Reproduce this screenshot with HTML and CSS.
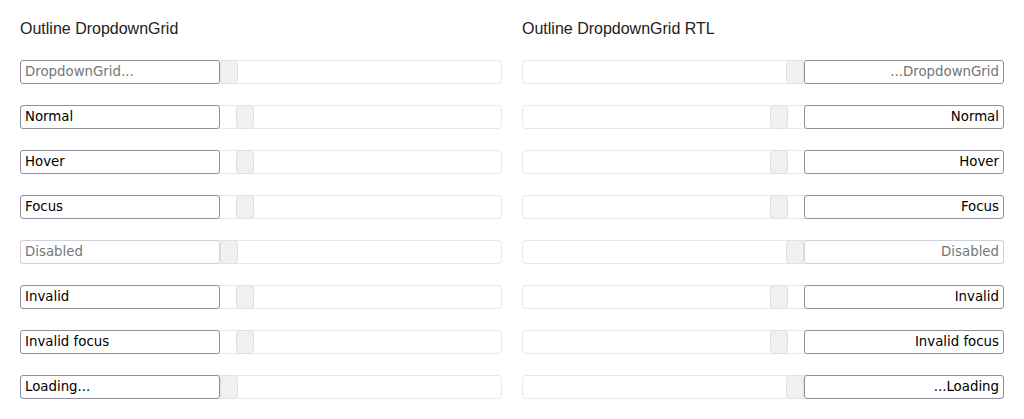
FILE: index.html
```html
<!DOCTYPE html>
<html>
<head>
<meta charset="utf-8">
<link rel="stylesheet" href="styles.css">
</head>
<body>
<div class="page">
  <section class="col">
    <h2 class="title">Outline DropdownGrid</h2>
    <div class="rows">
      <div class="dg"><input class="field" placeholder="DropdownGrid..."><span class="btn tight"></span></div>
      <div class="dg"><input class="field" value="Normal"><span class="btn"></span></div>
      <div class="dg"><input class="field" value="Hover"><span class="btn"></span></div>
      <div class="dg"><input class="field" value="Focus"><span class="btn"></span></div>
      <div class="dg"><input class="field disabled" value="Disabled" disabled><span class="btn tight"></span></div>
      <div class="dg"><input class="field" value="Invalid"><span class="btn"></span></div>
      <div class="dg"><input class="field" value="Invalid focus"><span class="btn"></span></div>
      <div class="dg"><input class="field" value="Loading..."><span class="btn tight"></span></div>
    </div>
  </section>
  <section class="col" dir="rtl">
    <h2 class="title" dir="ltr">Outline DropdownGrid RTL</h2>
    <div class="rows">
      <div class="dg"><input class="field" dir="rtl" placeholder="DropdownGrid..."><span class="btn tight"></span></div>
      <div class="dg"><input class="field" dir="rtl" value="Normal"><span class="btn"></span></div>
      <div class="dg"><input class="field" dir="rtl" value="Hover"><span class="btn"></span></div>
      <div class="dg"><input class="field" dir="rtl" value="Focus"><span class="btn"></span></div>
      <div class="dg"><input class="field disabled" dir="rtl" value="Disabled" disabled><span class="btn tight"></span></div>
      <div class="dg"><input class="field" dir="rtl" value="Invalid"><span class="btn"></span></div>
      <div class="dg"><input class="field" dir="rtl" value="Invalid focus"><span class="btn"></span></div>
      <div class="dg"><input class="field" dir="rtl" value="Loading..."><span class="btn tight"></span></div>
    </div>
  </section>
</div>
</body>
</html>
```
FILE: styles.css
```css
html, body {
  margin: 0;
  padding: 0;
  background: #ffffff;
}
.page {
  display: grid;
  grid-template-columns: 482px 482px;
  column-gap: 20px;
  padding: 20px;
}
.title {
  margin: 0;
  font-family: "Liberation Sans", Arial, sans-serif;
  font-weight: normal;
  font-size: 16px;
  line-height: 18px;
  color: #222222;
  text-align: left;
}
.rows {
  display: flex;
  flex-direction: column;
  gap: 21px;
  margin-top: 22px;
}
.dg {
  display: flex;
  align-items: stretch;
  box-sizing: border-box;
  height: 24px;
  border: 1px solid #e8e8e8;
  border-radius: 4px;
}
.field {
  box-sizing: border-box;
  width: 200px;
  height: 24px;
  margin: -1px 0;
  margin-inline-start: -1px;
  padding: 0 3px 2px 4px;
  border: 1px solid #8f8f9d;
  border-radius: 3px;
  background: #ffffff;
  font-family: "DejaVu Sans", sans-serif;
  font-size: 13.333px;
  color: #000000;
  outline: none;
}
.field[dir="rtl"] {
  padding: 0 4px 2px 3px;
}
.field::placeholder {
  color: #757575;
}
.field.disabled {
  border-color: #cfcfd6;
  color: #757575;
  background: #ffffff;
}
.btn {
  box-sizing: border-box;
  width: 18px;
  height: 24px;
  margin: -1px 0;
  margin-inline-start: 16px;
  background: #f0f0f0;
  border: 1px solid #e0e0e0;
  border-radius: 4px;
}
.btn.tight {
  margin-inline-start: 0;
}
```
